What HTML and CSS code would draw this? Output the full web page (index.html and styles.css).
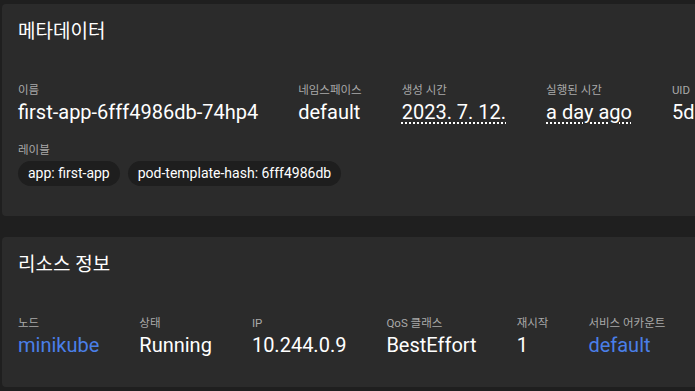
FILE: index.html
```html
<!DOCTYPE html>
<html lang="ko">
<head>
  <meta charset="UTF-8">
  <meta name="viewport" content="width=device-width, initial-scale=1">
  <title>Pod - first-app</title>
  <link rel="stylesheet" href="styles.css">
</head>
<body>

  <section class="card">
    <h2 class="card-title">메타데이터</h2>
    <div class="props">
      <div class="prop">
        <div class="prop-label">이름</div>
        <div class="prop-value">first-app-6fff4986db-74hp4</div>
      </div>
      <div class="prop">
        <div class="prop-label">네임스페이스</div>
        <div class="prop-value">default</div>
      </div>
      <div class="prop">
        <div class="prop-label">생성 시간</div>
        <div class="prop-value"><span class="dotted">2023. 7. 12.</span></div>
      </div>
      <div class="prop">
        <div class="prop-label">실행된 시간</div>
        <div class="prop-value"><span class="dotted">a day ago</span></div>
      </div>
      <div class="prop">
        <div class="prop-label">UID</div>
        <div class="prop-value">5db1c7e2-0a4f-4d2b-9a61-3f0c8e2b7d45</div>
      </div>
    </div>
    <div class="labels">
      <div class="prop-label">레이블</div>
      <div class="chips">
        <span class="chip">app: first-app</span>
        <span class="chip">pod-template-hash: 6fff4986db</span>
      </div>
    </div>
  </section>

  <section class="card">
    <h2 class="card-title">리소스 정보</h2>
    <div class="props">
      <div class="prop">
        <div class="prop-label">노드</div>
        <div class="prop-value"><a href="#" class="link">minikube</a></div>
      </div>
      <div class="prop">
        <div class="prop-label">상태</div>
        <div class="prop-value">Running</div>
      </div>
      <div class="prop">
        <div class="prop-label">IP</div>
        <div class="prop-value">10.244.0.9</div>
      </div>
      <div class="prop">
        <div class="prop-label">QoS 클래스</div>
        <div class="prop-value">BestEffort</div>
      </div>
      <div class="prop">
        <div class="prop-label">재시작</div>
        <div class="prop-value">1</div>
      </div>
      <div class="prop">
        <div class="prop-label">서비스 어카운트</div>
        <div class="prop-value"><a href="#" class="link">default</a></div>
      </div>
    </div>
  </section>

</body>
</html>
```

FILE: styles.css
```css
body {
  margin: 0;
  padding: 4px 0 0 2px;
  background: #1f1f1f;
  color: #fff;
  font-family: Roboto, "Noto Sans CJK KR", sans-serif;
  overflow: hidden;
}

.card {
  width: 720px;
  background: #2b2b2b;
  border-radius: 4px;
  padding: 16px 16px 30px;
  margin-bottom: 21px;
  box-sizing: border-box;
}

.card-title {
  margin: 0;
  font-size: 19px;
  line-height: 24px;
  font-weight: 400;
}

.props {
  display: flex;
  gap: 40px;
  margin-top: 38px;
  white-space: nowrap;
}

.prop-label {
  font-size: 11.5px;
  line-height: 16px;
  color: #a9a9a9;
}

.prop-value {
  margin-top: 2px;
  font-size: 20px;
  line-height: 24px;
}

.dotted {
  text-decoration: underline dotted;
  text-underline-offset: 3px;
}

.link {
  color: #4a7fe8;
  text-decoration: none;
}

.labels {
  margin-top: 18px;
}

.chips {
  display: flex;
  gap: 8px;
  margin-top: 3px;
}

.chip {
  background: #1e1e1e;
  border-radius: 13px;
  height: 25px;
  line-height: 25px;
  padding: 0 10px;
  font-size: 14px;
}
```
